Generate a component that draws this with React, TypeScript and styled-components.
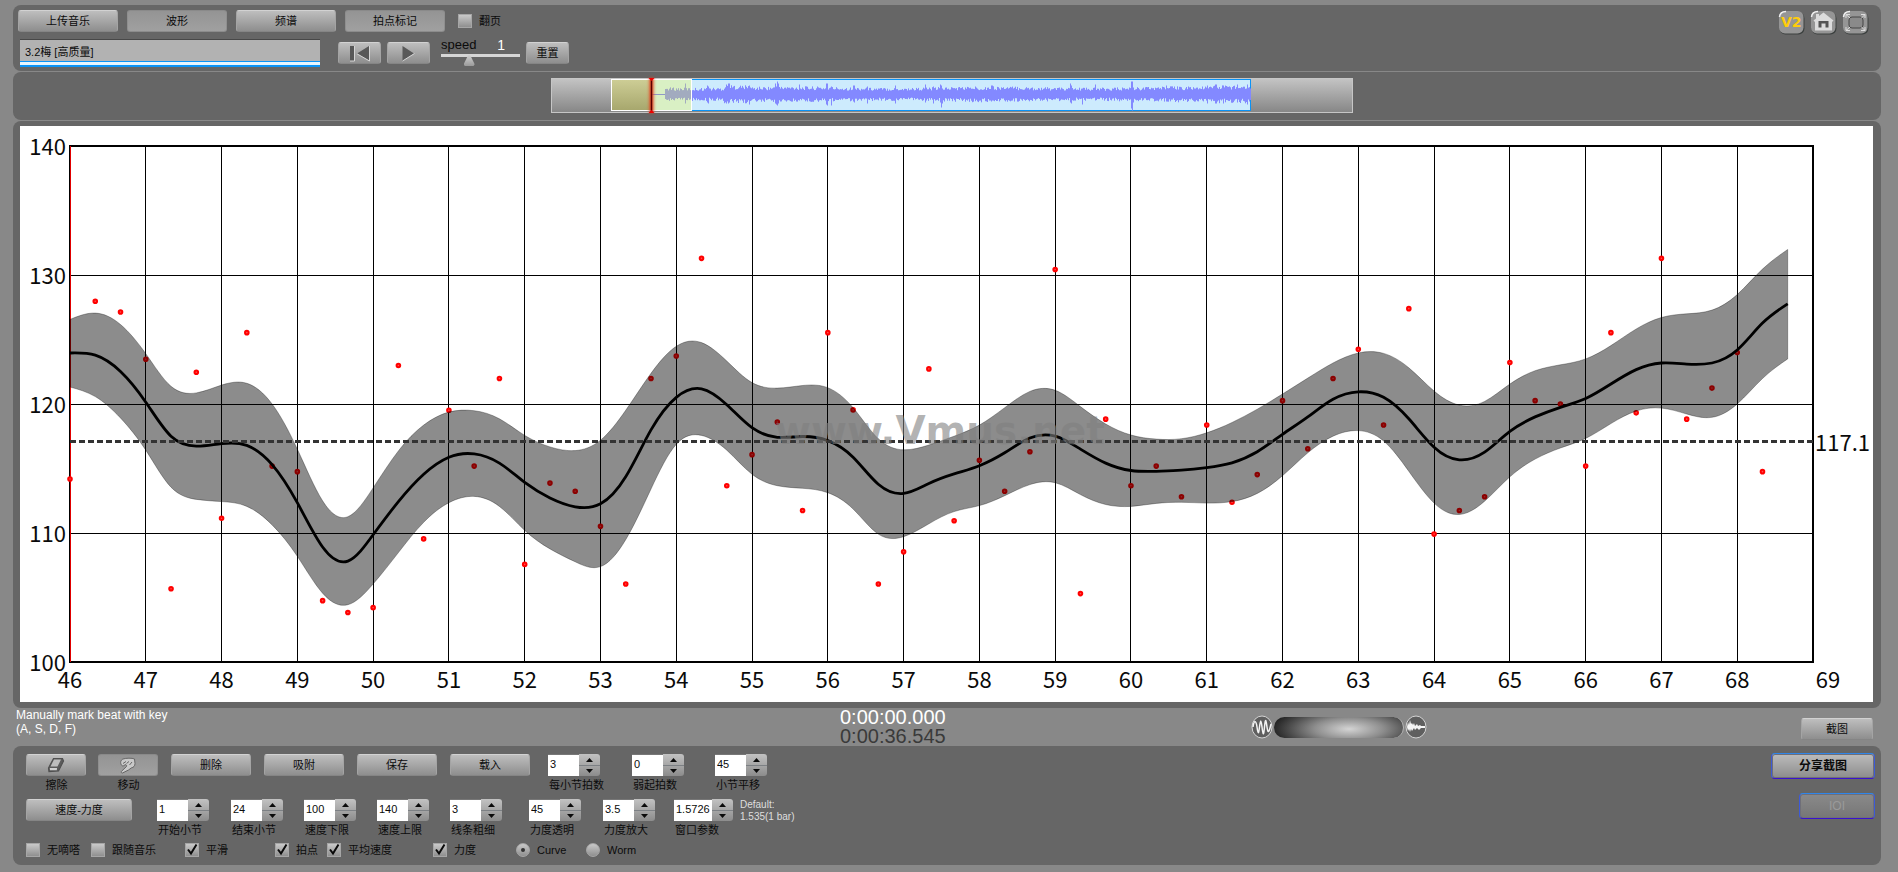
import React, { useState } from "react";
import styled, { createGlobalStyle, css } from "styled-components";

const GlobalStyle = createGlobalStyle`
  *, *::before, *::after { box-sizing: border-box; }
  body {
    margin: 0;
    background: #888888;
    color: #0b0b0b;
    font-family: "Liberation Sans", "Noto Sans CJK SC", sans-serif;
    font-size: 11px;
  }
  button, input { font-family: inherit; font-size: inherit; color: inherit; }
`;

/* ---------- layout ---------- */

const Page = styled.main`
  min-height: 100vh;
  padding: 5px 17px 7px 13px;
`;

const Stack = styled.div`
  display: flex;
  flex-direction: column;
  gap: 1px;
`;

const Panel = styled.section`
  background: #666666;
  border-radius: 8px;
`;

const Toolbar = styled(Panel)`
  display: flex;
  justify-content: space-between;
  align-items: flex-start;
  padding: 5px 12px 4px 5px;
`;

const ToolbarRows = styled.div`
  display: flex;
  flex-direction: column;
  gap: 7px;
`;

const Row = styled.div<{ $gap: number; $top?: boolean; $indent?: number }>`
  display: flex;
  align-items: ${(p) => (p.$top ? "flex-start" : "center")};
  gap: ${(p) => p.$gap}px;
  margin-left: ${(p) => p.$indent ?? 0}px;
`;

const OverviewPanel = styled(Panel)`
  display: flex;
  justify-content: center;
  padding: 6px 0 6px 10px;
`;

const ChartPanel = styled(Panel)`
  padding: 5px 8px 6px 7px;
`;

const StatusBar = styled.div`
  display: grid;
  grid-template-columns: 827px 411px 1fr auto;
  align-items: start;
  height: 38px;
  padding-right: 8px;
`;

const ControlPanel = styled(Panel)`
  display: flex;
  justify-content: space-between;
  padding: 7px 6px 8px 13px;
`;

const ControlRows = styled.div`
  display: flex;
  flex-direction: column;
  padding-top: 1px;
  gap: 7px;
`;

const ShareColumn = styled.div`
  display: flex;
  flex-direction: column;
  align-items: flex-end;
  gap: 14px;
`;

/* ---------- controls ---------- */

const Button = styled.button<{ $width: number; $pressed?: boolean }>`
  display: inline-flex;
  align-items: center;
  justify-content: center;
  width: ${(p) => p.$width}px;
  height: 22px;
  padding: 0;
  border: 1px solid;
  border-radius: 3px;
  line-height: 14px;
  ${(p) =>
    p.$pressed
      ? css`
          border-color: #8a8a8a #8f8f8f #8c8c8c;
          background: linear-gradient(#949494, #a0a0a0);
        `
      : css`
          border-color: #d2d2d2 #a4a4a4 #858585;
          background: linear-gradient(#bebebe, #8e8e8e);
        `}
`;

const RingedButton = styled.button<{ $width: number }>`
  width: ${(p) => p.$width}px;
  height: 26px;
  padding: 0;
  border: 1px solid;
  border-color: #2f86ea #3d5ad8 #3a12d0;
  border-radius: 4px;
  background: linear-gradient(#bcbcbc, #8c8c8c);
  box-shadow: inset 0 0 0 1px #6f6f78;
  font-size: 12px;
  font-weight: bold;
  line-height: 14px;

  &:disabled {
    background: linear-gradient(#8a8a8a, #767676);
    color: #9a9a9a;
    font-weight: normal;
  }
`;

const IconButton = styled.button`
  width: 27px;
  height: 25px;
  padding: 0;
  border: 0;
  background: none;
  svg { display: block; }
`;

const TopIcons = styled.nav`
  display: flex;
  gap: 5px;
`;

const TrackName = styled.input`
  width: 300px;
  height: 28px;
  padding: 0 5px 3px;
  border: 0;
  border-top: 1px solid #484848;
  border-bottom: 2px solid #0b93f5;
  background: linear-gradient(#b2b2b2, #b2b2b2 21px, #0b93f5 21px, #0b93f5 22px, #e8f6ff 22px);
  outline: none;
`;

const TransportGroup = styled.div`
  display: flex;
  gap: 6px;
  margin-left: 18px;
`;

const SpeedBox = styled.div`
  width: 79px;
  height: 28px;
  margin: 0 6px 0 11px;
`;

const SpeedLabel = styled.label`
  display: flex;
  justify-content: space-between;
  height: 15px;
  padding-right: 15px;
  font-size: 13px;
  line-height: 12px;
`;

const SpeedValue = styled.output`
  color: #ffffff;
  font-size: 14px;
`;

const SpeedRange = styled.input`
  display: block;
  width: 100%;
  height: 12px;
  margin: 0;
  appearance: none;
  background: none;
  &::-webkit-slider-runnable-track {
    height: 12px;
    background: linear-gradient(#d6d6d6 3px, transparent 3px);
  }
  &::-webkit-slider-thumb {
    appearance: none;
    width: 11px;
    height: 12px;
    background: linear-gradient(#d8d8d8, #9a9a9a);
    clip-path: polygon(50% 0, 60% 10%, 100% 85%, 90% 100%, 10% 100%, 0 85%, 40% 10%);
  }
`;

const CheckLabel = styled.label`
  display: inline-flex;
  align-items: center;
  gap: 7px;
  height: 14px;
  line-height: 14px;
  white-space: nowrap;
`;

const CheckFrame = styled.span`
  position: relative;
  width: 14px;
  height: 14px;
  svg {
    position: absolute;
    inset: 0;
    pointer-events: none;
  }
`;

const Mark = styled.input<{ $round?: boolean }>`
  display: block;
  width: 14px;
  height: 14px;
  margin: 0;
  appearance: none;
  border: 1px solid #a6a6a6;
  border-radius: ${(p) => (p.$round ? "50%" : "0")};
  background: linear-gradient(#c9c9c9, #8f8f8f);
`;

const OptionsRow = styled.div`
  display: grid;
  grid-template-columns: 65px 94px 90px 52px 106px 83px 70px 60px;
  margin-top: -1px;
`;

const Captioned = styled.div<{ $width: number; $center?: boolean }>`
  display: flex;
  flex-direction: column;
  gap: 2px;
  width: ${(p) => p.$width}px;
  align-items: ${(p) => (p.$center ? "center" : "flex-start")};
`;

const Caption = styled.label`
  padding-left: 1px;
  line-height: 14px;
  white-space: nowrap;
`;

const StepperBox = styled.div`
  display: flex;
  align-items: flex-start;
`;

const StepperInput = styled.input<{ $width: number }>`
  width: ${(p) => p.$width}px;
  height: 22px;
  padding: 0 0 4px 2px;
  border: 0;
  border-top: 1px solid #777777;
  background: #ffffff;
`;

const StepperButtons = styled.div`
  display: flex;
  flex-direction: column;
  width: 21px;
  height: 22px;
  overflow: hidden;
  border-radius: 0 3px 3px 0;
  background: linear-gradient(#c2c2c2, #8c8c8c);
  button {
    display: flex;
    align-items: center;
    justify-content: center;
    width: 21px;
    height: 11px;
    padding: 0;
    border: 0;
    background: none;
  }
  button + button { border-top: 1px solid #7c8084; }
`;

const DefaultNote = styled.p`
  margin: 0 0 0 7px;
  color: #dedede;
  font-size: 10px;
  line-height: 12px;
`;

const KeyHint = styled.p`
  margin: 0;
  padding-left: 3px;
  color: #ffffff;
  font-size: 12px;
  line-height: 14px;
`;

const Clock = styled.div`
  color: #ffffff;
  font-size: 20px;
  line-height: 19px;
  div + div { color: #3a3a3a; }
`;

const ZoomGroup = styled.div`
  display: flex;
  align-items: center;
  gap: 1px;
  height: 38px;
`;

const ZoomBar = styled.div`
  width: 130px;
  height: 21px;
  border-radius: 11px;
  border-right: 1px solid #b8b8b8;
  background: radial-gradient(ellipse 76px 24px at 75px 12px, #d4d4d4, #8e8e8e 45%, #4a4a4a 80%, #252525);
`;

const SnapshotSlot = styled.div`
  padding-top: 10px;
`;

const Drawing = styled.svg`
  display: block;
  width: 100%;
  background: #ffffff;
`;

/* ---------- icons ---------- */

const EraserIcon = () => (
  <svg width="18" height="16" viewBox="0 0 18 16" aria-hidden="true">
    <path d="M6.500 1.500 L15.500 1.500 L16.500 4 L11.500 14 L2 14.500 L1.500 11 Z" fill="#5c5c5c" stroke="#505050" strokeWidth="1.200" />
    <path d="M7 2.500 L14 2.500 L10.500 9.500 L3.500 9.500 Z" fill="#bdbdbd" />
    <path d="M2.800 11 L10 11 L9.800 13.200 L3 13.200 Z" fill="#d0d0d0" />
  </svg>
);

const SmudgeIcon = () => (
  <svg width="18" height="17" viewBox="0 0 18 17" aria-hidden="true">
    <path
      d="M2.500 8 C1 6 1.500 3 4 2 C7 1 13 .8 15.500 2 L16 6.500 C16 9 14.500 10.500 12.500 10.800 L9.500 13 L3.500 16 C2 16 1.800 14.800 3 13.800 L7.500 9.500 C8 7.500 6.500 7 5 8.500 C4 9.300 3 9 2.500 8 Z"
      fill="#c9c9c9"
      stroke="#666"
      strokeWidth="1"
    />
    <path d="M4 6.500 L7 4.500 M7.500 6.500 L10 4.500 M10.500 8 L13 5" stroke="#666" strokeWidth="1" fill="none" />
  </svg>
);

const PrevIcon = () => (
  <svg width="22" height="17" viewBox="0 0 22 17" aria-hidden="true">
    <path d="M1 1 H5 V16 H1 Z M20 1 V15.500 L8 8.500 Z" fill="#585858" />
    <path d="M1 16 H5.500 V1 M20.500 1 V16 L8 8.800" fill="none" stroke="#d5d5d5" />
  </svg>
);

const PlayIcon = () => (
  <svg width="15" height="17" viewBox="0 0 15 17" aria-hidden="true">
    <path d="M1.500 1 L13 8.500 L1.500 16 Z" fill="#585858" />
    <path d="M1.500 16 L13.500 8.500" stroke="#d5d5d5" />
  </svg>
);

const IconTile = ({ children }: { children: React.ReactNode }) => (
  <svg width="27" height="25" viewBox="0 0 27 25" aria-hidden="true">
    <rect x="1.500" y="2.500" width="25" height="22" rx="6" fill="#3c403f" />
    <rect x="1" y="1" width="24.500" height="22.500" rx="6" fill="#959595" />
    <path d="M1.500 7 Q2 1.500 8 1.500" stroke="#f0f0f0" strokeWidth="1.500" fill="none" />
    {children}
  </svg>
);

const Arrow = ({ down }: { down?: boolean }) => (
  <svg width="7" height="4" viewBox="0 0 7 4" aria-hidden="true">
    <path d={down ? "M0 0 H7 L3.500 4 Z" : "M0 4 H7 L3.500 0 Z"} fill="#0a0a0a" />
  </svg>
);

const WaveOutIcon = () => (
  <svg width="22" height="24" viewBox="0 0 22 24" aria-hidden="true">
    <ellipse cx="11" cy="12" rx="10" ry="11" fill="#5f5f5f" stroke="#d4d4d4" />
    <path
      d="M2 12 C3 5 5 5 6 12 S7.500 20 8.500 12 S10 4 11 12 S12.500 22 13.500 12 S15 5 16 12 S18 18 20 9"
      fill="none"
      stroke="#f4f4f4"
      strokeWidth="1.500"
    />
  </svg>
);

const WaveInIcon = () => (
  <svg width="22" height="24" viewBox="0 0 22 24" aria-hidden="true">
    <ellipse cx="11" cy="12" rx="10" ry="11" fill="#5f5f5f" stroke="#d4d4d4" />
    <path
      d="M2 12 L3 7 L4 10 L5 5 L6 9 L7 8 L8 10 L9 8 L10 11 L12 9 L13 11 L15 10 L16 11 L20 11 V13 L16 13 L14 15 L12 13 L10 15 L9 13 L7 16 L6 14 L5 17 L4 14 L3 16 Z"
      fill="#f6f6f6"
    />
  </svg>
);

/* ---------- small parts ---------- */

type CheckProps = { label: string; checked?: boolean };

const Check = ({ label, checked = false }: CheckProps) => {
  const [on, setOn] = useState(checked);
  return (
    <CheckLabel>
      <CheckFrame>
        <Mark type="checkbox" checked={on} onChange={() => setOn(!on)} />
        {on && (
          <svg width="14" height="14" viewBox="0 0 14 14" aria-hidden="true">
            <path d="M3 6.500 L6 10.500 L11.500 1.500" fill="none" stroke="#0a0a0a" strokeWidth="2" />
          </svg>
        )}
      </CheckFrame>
      {label}
    </CheckLabel>
  );
};

type ChoiceProps = { label: string; selected: boolean; onSelect: () => void };

const Choice = ({ label, selected, onSelect }: ChoiceProps) => (
  <CheckLabel>
    <CheckFrame>
      <Mark $round type="radio" name="view" checked={selected} onChange={onSelect} />
      {selected && (
        <svg width="14" height="14" viewBox="0 0 14 14" aria-hidden="true">
          <circle cx="7" cy="7" r="2" fill="#333" />
        </svg>
      )}
    </CheckFrame>
    {label}
  </CheckLabel>
);

type StepperProps = { id: string; label: string; value: string; column: number; inputWidth?: number };

const Stepper = ({ id, label, value, column, inputWidth = 31 }: StepperProps) => (
  <Captioned $width={column}>
    <StepperBox>
      <StepperInput id={id} $width={inputWidth} defaultValue={value} />
      <StepperButtons>
        <button type="button" aria-label={`${label} +`}><Arrow /></button>
        <button type="button" aria-label={`${label} -`}><Arrow down /></button>
      </StepperButtons>
    </StepperBox>
    <Caption htmlFor={id}>{label}</Caption>
  </Captioned>
);

/* ---------- waveform overview ---------- */

const WAVE_START = 114;
const WAVE_END = 700;
/* Columns that rise above the general level: [up, down] in pixels. */
const PEAKS: Record<number, [number, number]> = {
  134: [11, 9], 156: [9, 8], 157: [8, 9], 175: [10, 9], 177: [11, 9], 178: [11, 8], 198: [9, 10], 224: [11, 9],
  225: [8, 10], 226: [13, 11], 227: [11, 9], 248: [10, 6], 275: [11, 10], 276: [11, 11], 280: [8, 11], 302: [9, 7],
  303: [9, 8], 316: [8, 9], 344: [9, 9], 374: [10, 8], 382: [8, 9], 389: [10, 8], 390: [9, 13], 391: [6, 9],
  440: [9, 7], 441: [9, 6], 519: [11, 8], 520: [9, 9], 531: [6, 10], 544: [10, 6], 580: [13, 14], 581: [13, 16],
  582: [7, 8], 615: [9, 7], 656: [9, 9], 664: [10, 9], 665: [10, 9], 672: [9, 9], 686: [10, 8], 696: [10, 10],
};

const wavePath = () => {
  let d = "";
  for (let x = WAVE_START; x < WAVE_END; x += 1) {
    const noise = Math.abs(Math.sin(x * 12.9898) * 43758.5453) % 1;
    const dip = Math.abs(Math.sin(x * 78.233) * 12543.123) % 1;
    const loud = x > 660 || (x > 172 && x < 200) ? 1.3 : 1.05 + 0.1 * Math.sin(x / 31);
    const [up, down] = PEAKS[x] ?? [(3.8 + noise * 3.4) * loud, (3.2 + dip * 3.6) * loud];
    d += `M${x + 0.5} ${(16.5 - up).toFixed(1)}V${(16.5 + down).toFixed(1)}`;
  }
  return d;
};

const Overview = () => (
  <svg width="802" height="36" viewBox="0 0 802 36" overflow="visible" role="img" aria-label="waveform overview">
    <defs>
      <linearGradient id="track" x1="0" y1="0" x2="0" y2="1">
        <stop offset="0" stopColor="#c4c4c4" />
        <stop offset="1" stopColor="#868686" />
      </linearGradient>
      <linearGradient id="lead" x1="0" y1="0" x2="0" y2="1">
        <stop offset="0" stopColor="#cdcd95" />
        <stop offset="1" stopColor="#a6a66c" />
      </linearGradient>
      <filter id="glow" filterUnits="userSpaceOnUse" x="90" y="-4" width="22" height="44">
        <feGaussianBlur stdDeviation="1.500" />
      </filter>
    </defs>
    <rect x="0.500" y="0.500" width="801" height="34" fill="url(#track)" stroke="#c6c6c6" />
    <rect x="141" y="1" width="559" height="32" fill="#cdebfd" />
    <path d="M100 1.500H700M100 32.500H700M699.500 1V33" stroke="#0b93f5" strokeWidth="1" />
    <rect x="60" y="2" width="40" height="31" fill="url(#lead)" />
    <rect x="100" y="2" width="41" height="31" fill="#d9f0c4" />
    <path d="M100 16.500H114" stroke="#9098c8" />
    <svg x="113" y="0" width="28" height="36" viewBox="113 0 28 36">
      <path d={wavePath()} stroke="#a2abbf" />
    </svg>
    <svg x="141" y="0" width="559" height="36" viewBox="141 0 559 36">
      <path d={wavePath()} stroke="#8389ff" />
    </svg>
    <rect x="60.500" y="1.500" width="80" height="31" fill="none" stroke="#ffffff" />
    <path d="M100.500 0V35" stroke="#e83a1c" strokeWidth="4" filter="url(#glow)" />
    <path d="M100.500 0V35" stroke="#5a0000" strokeWidth="1.500" />
    <path d="M97.500 0H103.500L100.500 3ZM97.500 35H103.500L100.500 32Z" fill="#f00000" />
  </svg>
);

/* ---------- tempo chart ---------- */

/* Three samples per bar, stored as depth below the 140 line; 34.9 units are one BPM. */
const UNITS_PER_BPM = 34.9;
const FIRST_BAR = 46;
const LAST_BAR = 69;

const tempo = [
  630, 636, 680, 763, 855, 882, 875, 880, 932, 1035, 1155, 1193, 1122, 1032, 958, 912, 903, 928, 980, 1022, 1046, 1038,
  965, 838, 750, 727, 770, 832, 858, 856, 867, 912, 985, 1010, 983, 957, 935, 900, 860, 855, 890, 928, 948, 950, 947,
  940, 927, 897, 850, 803, 755, 735, 750, 808, 885, 919, 898, 842, 803, 777, 753, 714, 675, 657, 660, 657, 622, 549, 497,
];
const upper = [
  539, 522, 553, 632, 720, 738, 717, 712, 768, 890, 1030, 1073, 995, 895, 825, 790, 786, 808, 853, 884, 894, 866,
  785, 685, 612, 602, 652, 710, 725, 718, 724, 778, 862, 892, 879, 855, 825, 778, 734, 731, 775, 822, 852, 863, 862,
  846, 818, 782, 741, 698, 657, 630, 631, 670, 733, 771, 761, 714, 678, 662, 646, 610, 565, 534, 524, 514, 472, 403, 350,
];
const lower = [
  722, 748, 806, 893, 993, 1026, 1032, 1045, 1095, 1180, 1280, 1311, 1255, 1170, 1088, 1035, 1018, 1045, 1110, 1160,
  1195, 1208, 1135, 998, 877, 853, 893, 958, 989, 996, 1008, 1052, 1120, 1127, 1092, 1059, 1043, 1016, 986, 981, 1013,
  1040, 1045, 1037, 1034, 1036, 1032, 1010, 962, 900, 855, 840, 868, 950, 1036, 1067, 1031, 965, 917, 887, 861, 821,
  787, 779, 795, 804, 768, 699, 646,
];
const beats = [
  971, 490, 519, 647, 1268, 682, 1077, 575, 936, 951, 1300, 1332, 1319, 664, 1133, 785, 936, 699, 1202, 982, 1004,
  1099, 1255, 699, 638, 374, 989, 905, 817, 1056, 575, 784, 1255, 1168, 673, 1084, 920, 1004, 897, 404, 1281, 809, 989,
  936, 1019, 825, 1034, 959, 759, 889, 699, 620, 825, 510, 1120, 1056, 1019, 656, 759, 768, 936, 575, 792, 374, 809,
  725, 629, 951,
];

const PLOT = { left: 50, right: 1793, top: 20, bottom: 536 };
const barX = (bar: number) =>
  PLOT.left + ((bar - FIRST_BAR) * (PLOT.right - PLOT.left)) / (LAST_BAR - FIRST_BAR);
const bpmY = (bpm: number) => PLOT.top + ((140 - bpm) * (PLOT.bottom - PLOT.top)) / 40;

type Point = [number, number];
const toPoints = (samples: number[]): Point[] =>
  samples.map((v, i) => [barX(FIRST_BAR + i / 3), bpmY(140 - (v - 70) / UNITS_PER_BPM)]);

/* Slopes of the natural cubic spline through evenly spaced points. */
const splineSlopes = (y: number[]) => {
  const n = y.length;
  const ratio: number[] = [];
  const rest: number[] = [];
  for (let i = 0; i < n; i += 1) {
    const edge = i === 0 || i === n - 1;
    const rhs = 3 * (y[Math.min(i + 1, n - 1)] - y[Math.max(i - 1, 0)]);
    const pivot = (edge ? 2 : 4) - (i ? ratio[i - 1] : 0);
    ratio.push(1 / pivot);
    rest.push((rhs - (i ? rest[i - 1] : 0)) / pivot);
  }
  const slopes = [...rest];
  for (let i = n - 2; i >= 0; i -= 1) slopes[i] -= ratio[i] * slopes[i + 1];
  return slopes;
};

const smooth = (points: Point[]) => {
  const slopes = splineSlopes(points.map((p) => p[1]));
  let d = `${points[0][0].toFixed(1)} ${points[0][1].toFixed(1)}`;
  for (let i = 0; i < points.length - 1; i += 1) {
    const [x0, y0] = points[i];
    const [x1, y1] = points[i + 1];
    const third = (x1 - x0) / 3;
    const nums = [x0 + third, y0 + slopes[i] / 3, x1 - third, y1 - slopes[i + 1] / 3, x1, y1];
    d += `C${nums.map((v) => v.toFixed(1)).join(" ")}`;
  }
  return d;
};

const bars = Array.from({ length: LAST_BAR - FIRST_BAR + 1 }, (_, i) => FIRST_BAR + i);
const AXIS_FONT = '"Noto Sans CJK SC", "Noto Sans", sans-serif';

const TempoChart = () => (
  <Drawing viewBox="0 0 1853 576" role="img" aria-label="tempo curve">
    <g stroke="#000000" strokeWidth="1" shapeRendering="crispEdges">
      {bars.slice(1, -1).map((bar) => (
        <line key={bar} x1={barX(bar)} x2={barX(bar)} y1={PLOT.top} y2={PLOT.bottom} />
      ))}
      {[130, 120, 110].map((bpm) => (
        <line key={bpm} x1={PLOT.left} x2={PLOT.right} y1={bpmY(bpm)} y2={bpmY(bpm)} />
      ))}
    </g>
    <rect x={PLOT.left} y={PLOT.top} width={PLOT.right - PLOT.left} height={PLOT.bottom - PLOT.top} fill="none" stroke="#000" strokeWidth="2" />
    <line x1={PLOT.left + 0.5} x2={PLOT.left + 0.5} y1={PLOT.top} y2={PLOT.bottom} stroke="#e00000" strokeWidth="1" />
    {toPoints(beats).map(([x, y], i) => (
      <circle key={i} cx={x} cy={y} r="1.800" fill="#ff5050" stroke="#ff0000" strokeWidth="2" />
    ))}
    <path
      d={`M${smooth(toPoints(upper))}L${smooth(toPoints(lower).reverse())}Z`}
      fill="#000000"
      fillOpacity="0.45"
      stroke="#000000"
      strokeOpacity="0.3"
    />
    <path d={`M${smooth(toPoints(tempo))}`} fill="none" stroke="#000000" strokeWidth="2.800" />
    <line x1={PLOT.left} x2="1796" y1={bpmY(117.1)} y2={bpmY(117.1)} stroke="#333333" strokeWidth="3" strokeDasharray="6 3" />
    <text x="755" y="318" fontFamily='"DejaVu Sans", sans-serif' fontWeight="bold" fontSize="39" fill="#808080" fillOpacity="0.6">
      www.Vmus.net
    </text>
    <g fontFamily={AXIS_FONT} fontSize="22" fill="#0a0a0a">
      {[140, 130, 120, 110, 100].map((bpm) => (
        <text key={bpm} x="46" y={bpmY(bpm) + 9} textAnchor="end">{bpm}</text>
      ))}
      {bars.map((bar) => (
        <text key={bar} x={bar === LAST_BAR ? 1808 : barX(bar)} y="562" textAnchor="middle">{bar}</text>
      ))}
      <text x="1795" y="325">117.1</text>
    </g>
  </Drawing>
);

/* ---------- page ---------- */

export default function App() {
  const [speed, setSpeed] = useState("1");
  const [view, setView] = useState("Curve");

  return (
    <Page>
      <GlobalStyle />
      <Stack>
        <Toolbar>
          <ToolbarRows>
            <Row $gap={9}>
              <Button $width={100}>上传音乐</Button>
              <Button $width={100} $pressed>波形</Button>
              <Button $width={100}>频谱</Button>
              <Button $width={100} $pressed>拍点标记</Button>
              <Row $gap={0} $indent={4}>
                <Check label="翻页" />
              </Row>
            </Row>
            <Row $gap={0} $indent={2}>
              <TrackName aria-label="音乐" defaultValue="3.2梅 [高质量]" />
              <TransportGroup>
                <Button $width={43} aria-label="回到开头"><PrevIcon /></Button>
                <Button $width={43} aria-label="播放"><PlayIcon /></Button>
              </TransportGroup>
              <SpeedBox>
                <SpeedLabel htmlFor="speed">
                  speed <SpeedValue>{speed}</SpeedValue>
                </SpeedLabel>
                <SpeedRange
                  id="speed"
                  type="range"
                  min="0.5"
                  max="2"
                  step="0.1"
                  value={speed}
                  onChange={(e) => setSpeed(e.target.value)}
                />
              </SpeedBox>
              <Button $width={43}>重置</Button>
            </Row>
          </ToolbarRows>
          <TopIcons>
            <IconButton aria-label="V2">
              <IconTile>
                <text x="3" y="17" fontFamily='"DejaVu Sans", sans-serif' fontWeight="bold" fontSize="14" fill="#ffcc0a">V2</text>
              </IconTile>
            </IconButton>
            <IconButton aria-label="主页">
              <IconTile>
                <path d="M13.500 2.500 L23.500 10.500 L22 12 V20.500 H5 V12 L3.500 10.500 L6 8.500 V4 H9 V6 Z" fill="#dcdcdc" />
                <path d="M8.500 17.500 V11 H18.500 V17.500 H15.500 V13.500 H11.500 V17.500 Z" fill="#555" />
              </IconTile>
            </IconButton>
            <IconButton aria-label="全屏">
              <IconTile>
                <rect x="7" y="7" width="14" height="11" rx="3" fill="#8a8a8a" stroke="#454545" />
                <path
                  d="M4 8V4.500H8M4 4.500L8 8M23 8V4.500H19M23 4.500L19.500 8M4 17V20.500H8M4 20.500L8 17M23 17V20.500H19M23 20.500L19.500 17"
                  fill="none"
                  stroke="#dedede"
                />
              </IconTile>
            </IconButton>
          </TopIcons>
        </Toolbar>

        <OverviewPanel>
          <Overview />
        </OverviewPanel>

        <ChartPanel>
          <TempoChart />
        </ChartPanel>
      </Stack>

      <StatusBar>
        <KeyHint>
          Manually mark beat with key
          <br />
          (A, S, D, F)
        </KeyHint>
        <Clock>
          <div>0:00:00.000</div>
          <div>0:00:36.545</div>
        </Clock>
        <ZoomGroup>
          <WaveOutIcon />
          <ZoomBar />
          <WaveInIcon />
        </ZoomGroup>
        <SnapshotSlot>
          <Button $width={72}>截图</Button>
        </SnapshotSlot>
      </StatusBar>

      <ControlPanel>
        <ControlRows>
          <Row $gap={13} $top>
            <Row $gap={12} $top>
              <Captioned $width={60} $center>
                <Button id="erase" $width={60}><EraserIcon /></Button>
                <Caption htmlFor="erase">擦除</Caption>
              </Captioned>
              <Captioned $width={60} $center>
                <Button id="move" $width={60} $pressed><SmudgeIcon /></Button>
                <Caption htmlFor="move">移动</Caption>
              </Captioned>
            </Row>
            <Button $width={80}>删除</Button>
            <Button $width={80}>吸附</Button>
            <Button $width={80}>保存</Button>
            <Button $width={80}>载入</Button>
            <Row $gap={0} $indent={5} $top>
              <Stepper id="beats" label="每小节拍数" value="3" column={84} />
              <Stepper id="pickup" label="弱起拍数" value="0" column={83} />
              <Stepper id="shift" label="小节平移" value="45" column={84} />
            </Row>
          </Row>
          <Row $gap={25} $top>
            <Button $width={106}>速度-力度</Button>
            <Row $gap={0} $top>
              <Stepper id="from" label="开始小节" value="1" column={74} />
              <Stepper id="to" label="结束小节" value="24" column={73} />
              <Stepper id="low" label="速度下限" value="100" column={73} />
              <Stepper id="high" label="速度上限" value="140" column={73} />
              <Stepper id="line" label="线条粗细" value="3" column={79} />
              <Stepper id="alpha" label="力度透明" value="45" column={74} />
              <Stepper id="scale" label="力度放大" value="3.5" column={71} />
              <Stepper id="window" label="窗口参数" value="1.5726" column={59} inputWidth={38} />
              <DefaultNote>
                Default:
                <br />
                1.535(1 bar)
              </DefaultNote>
            </Row>
          </Row>
          <OptionsRow>
            <Check label="无嘀嗒" />
            <Check label="跟随音乐" />
            <Check label="平滑" checked />
            <Check label="拍点" checked />
            <Check label="平均速度" checked />
            <Check label="力度" checked />
            <Choice label="Curve" selected={view === "Curve"} onSelect={() => setView("Curve")} />
            <Choice label="Worm" selected={view === "Worm"} onSelect={() => setView("Worm")} />
          </OptionsRow>
        </ControlRows>
        <ShareColumn>
          <RingedButton $width={104}>分享截图</RingedButton>
          <RingedButton $width={76} disabled>IOI</RingedButton>
        </ShareColumn>
      </ControlPanel>
    </Page>
  );
}
